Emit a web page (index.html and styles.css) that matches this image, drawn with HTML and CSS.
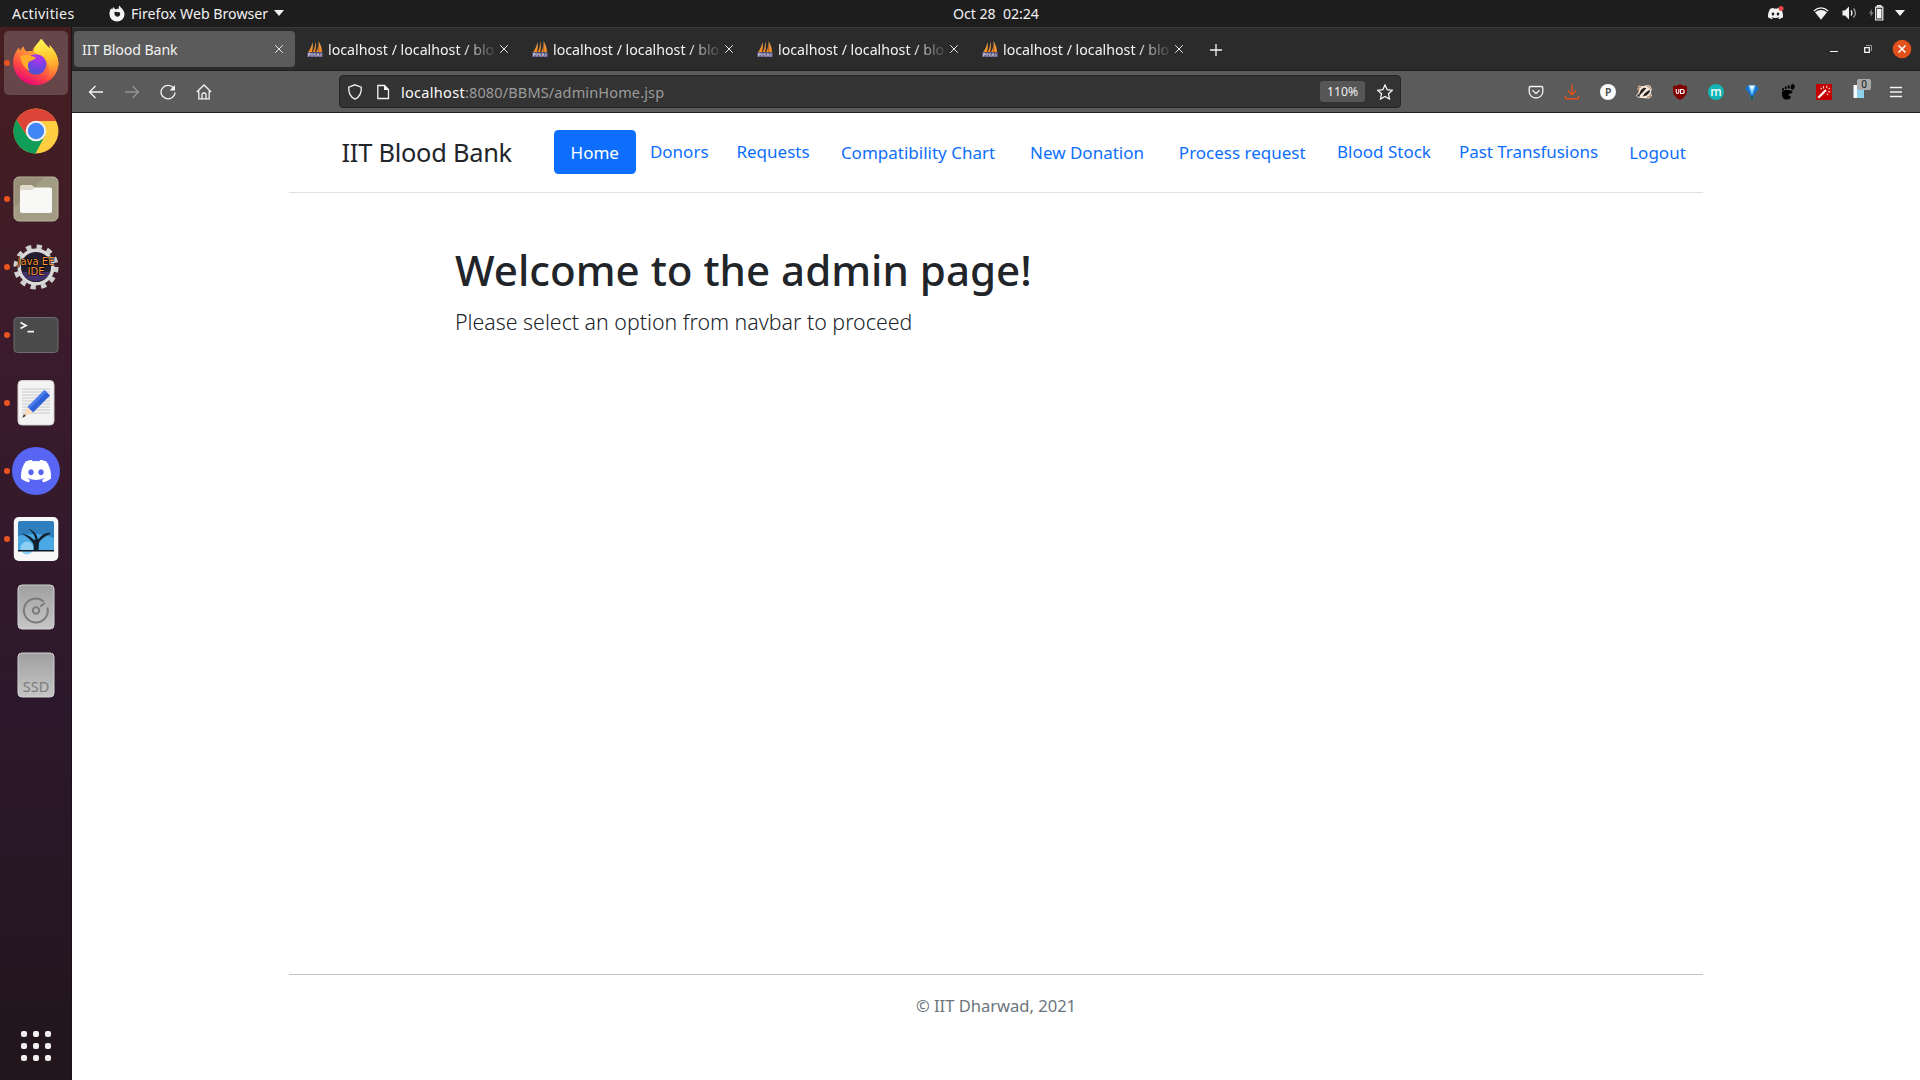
FILE: index.html
```html
<!DOCTYPE html>
<html lang="en">
<head>
<meta charset="utf-8">
<title>IIT Blood Bank</title>
<link rel="stylesheet" href="styles.css">
</head>
<body>
<svg class="defs" aria-hidden="true">
  <defs>
    <linearGradient id="sail" x1="0" y1="0" x2="0" y2="1"><stop offset="0" stop-color="#d9a36a"/><stop offset="1" stop-color="#ff8a12"/></linearGradient>
    <symbol id="pma" viewBox="0 0 16 16">
      <path d="M5.500 1C6 4 6 8 5 11L.8 11.500C3 8.500 4.700 5 5.500 1zM8.500 .3C9.200 4 9 8 8 11L5.700 11.300C7.500 8 8.200 4 8.500 .3zM11.500 0C13.500 3 15 7 15 11L9 11.200C11 8 11.700 4 11.500 0z" fill="url(#sail)"/>
      <path d="M11.700 1V11" stroke="#7a4a20" stroke-width=".7"/>
      <path d="M.3 11.200H15.700V16H.3z" fill="#5f5c86"/>
      <path d="M1.500 15.500V12.500H3.300V14H1.500M5 15.500V12.500L6.500 14L8 12.500V15.500M9.700 15.500L11 12.500L12.300 15.500M14 12.500V15.500" fill="none" stroke="#c9c7e0" stroke-width=".9"/>
    </symbol>
    <symbol id="close" viewBox="0 0 10 10"><path d="M1.200 1.200L8.800 8.800M8.800 1.200L1.200 8.800" stroke="#e8e8e8" stroke-width="1" fill="none"/></symbol>
    <symbol id="discord" viewBox="0 0 127 96"><path fill="currentColor" d="M107.700 8.070A105.150 105.150 0 0 0 81.470 0a72.060 72.060 0 0 0-3.360 6.830 97.680 97.680 0 0 0-29.110 0A72.370 72.370 0 0 0 45.640 0a105.890 105.890 0 0 0-26.250 8.090C2.790 32.650-1.710 56.600.54 80.210a105.730 105.730 0 0 0 32.170 16.150 77.700 77.700 0 0 0 6.890-11.110 68.420 68.420 0 0 1-10.850-5.180c.91-.66 1.800-1.340 2.660-2a75.570 75.570 0 0 0 64.320 0c.87.71 1.760 1.390 2.660 2a68.680 68.680 0 0 1-10.870 5.190 77 77 0 0 0 6.890 11.100 105.250 105.250 0 0 0 32.190-16.140c2.640-27.380-4.510-51.110-18.900-72.150zM42.450 65.690C36.180 65.690 31 60 31 53s5-12.740 11.430-12.740S54 46 53.890 53s-5.050 12.690-11.440 12.690zm42.240 0C78.410 65.690 73.250 60 73.250 53s5-12.740 11.440-12.740S96.230 46 96.120 53s-5.040 12.690-11.430 12.690z"/></symbol>
  </defs>
</svg>

<div class="desktop">
  <header class="topbar">
    <span class="activities">Activities</span>
    <svg class="app-mark" viewBox="0 0 16 16"><path d="M4.200 1.500L6.500 4C7.500 3 9 3 10 3.500C9.500 2.500 9.700 1 10.500 0C11 2 15.500 4 15.500 8.800A7.500 7.200 0 0 1 .5 8.800C.3 6 1.500 4.500 2 2.800L3.200 4z" fill="#f2f2f2"/><path d="M5.500 6.500C7.500 6 8 7 10 6.500C12 7.500 11.500 11 8.500 11.200C6 11.200 5 9 5.500 6.500z" fill="#1d1d1d"/></svg>
    <span class="app-name">Firefox Web Browser</span>
    <i class="caret"></i>
    <span class="clock">Oct 28&nbsp; 02:24</span>
    <div class="tray">
      <svg class="tray-discord" viewBox="0 0 16 14"><use href="#discord" y="1.500" width="15" height="12"/><circle cx="13" cy="2.500" r="2.500" fill="#f04747"/></svg>
      <svg class="tray-wifi" viewBox="0 0 16 13"><path d="M.8 4Q8-2.200 15.200 4" fill="none" stroke="#f2f2f2" stroke-width="1.200"/><path d="M2 5.300Q8 .5 14 5.300L8 12.800z" fill="#f2f2f2"/></svg>
      <svg class="tray-sound" viewBox="0 0 16 14"><path d="M.5 4.500H3L7 .5V13.500L3 9.500H.5z" fill="#f2f2f2"/><path d="M9 4.500Q11 7 9 9.500" stroke="#f2f2f2" stroke-width="1.300" fill="none"/><path d="M11.500 2.500Q15.500 7 11.500 11.500" stroke="#aaa" stroke-width="1.200" fill="none"/></svg>
      <svg class="tray-battery" viewBox="0 0 15 16"><path d="M3 4L0 8.500H2L1.500 12L4.500 7.500H2.500z" fill="#8a8a8a"/><path d="M6.700 2.200H13.800V15H6.700zM8.500 2V.7H12V2" fill="none" stroke="#f2f2f2" stroke-width="1.200"/><path d="M8 3.800H12.500V13.500H8z" fill="#f2f2f2"/></svg>
      <i class="caret"></i>
    </div>
  </header>

  <div class="workspace">
    <aside class="dock">
      <div class="tile active running">
        <svg viewBox="0 0 48 48">
          <defs>
            <linearGradient id="fx" x1=".8" y1="0" x2=".3" y2="1"><stop offset="0" stop-color="#fff44f"/><stop offset=".35" stop-color="#ffa436"/><stop offset=".7" stop-color="#ff4a42"/><stop offset="1" stop-color="#e4007c"/></linearGradient>
            <linearGradient id="fx2" x1=".4" y1="0" x2=".6" y2="1"><stop offset="0" stop-color="#fff44f"/><stop offset=".5" stop-color="#ffc52f"/><stop offset="1" stop-color="#ff7a30" stop-opacity=".2"/></linearGradient>
            <radialGradient id="fxg" cx=".6" cy=".2" r=".9"><stop offset="0" stop-color="#b833e8"/><stop offset=".5" stop-color="#7542e5"/><stop offset="1" stop-color="#3a5bc4"/></radialGradient>
          </defs>
          <path d="M30 .5C33 5 35 7 38 9.500L37.500 6C43 12 46.500 18 46.500 25A22.700 22.700 0 0 1 1.200 25C1 18 3 13 7 8.500L8 12C9 10 10 8.500 12 7.500C11.800 10 13 11.500 15 12.500C17 12 19 12 20.500 12.200C21 8 25 6 28.500 .5z" fill="url(#fx)"/>
          <path d="M30 .5C33 5 35 7 38 9.500L37.500 6C43 12 46.500 18 46.500 25C46 34 40 39 34 41C39 36 38 24 32 18C29 15 24 16 22 12.500C22 8 25 6 28.500 .5z" fill="url(#fx2)"/>
          <circle cx="24" cy="25.500" r="10.300" fill="url(#fxg)"/>
          <path d="M8 17C12 15 18 16 24 18.500C22.500 21.500 18 21.500 16.500 23.500C15.500 26 15.500 29 18 32C13 30 9 24 8 17z" fill="#ffab2e"/>
        </svg>
      </div>
      <div class="tile">
        <svg viewBox="0 0 48 48">
          <circle cx="24" cy="24" r="22.500" fill="#ffcd40"/>
          <path d="M24 24L32.700 29L23.500 46.500A22.500 22.500 0 0 1 4.500 12.750L15.300 29z" fill="#0f9d58"/>
          <path d="M4.500 12.750A22.500 22.500 0 0 1 44.200 14H24L15.300 29z" fill="#db4437"/>
          <circle cx="24" cy="24" r="10.300" fill="#f1f1f1"/><circle cx="24" cy="24" r="8.200" fill="#4285f4"/>
        </svg>
      </div>
      <div class="tile running">
        <svg viewBox="0 0 48 48"><rect x="2" y="2" width="44" height="44" rx="5" fill="#a39c84" stroke="#bdb7a1"/><path d="M2.500 32L32 2.500H7Q2.500 2.500 2.500 7z" fill="#978f77"/><path d="M8 12Q8 10 10 10H20L24 14V20H8z" fill="#dedacb"/><path d="M8 17Q8 15 10 15H20L23 12.500H38Q40 12.500 40 14.500V36Q40 38 38 38H10Q8 38 8 36z" fill="#f8f8f6"/></svg>
      </div>
      <div class="tile running">
        <svg class="ide" viewBox="0 0 48 48"><circle cx="24" cy="24" r="20.300" fill="none" stroke="#cfcfcf" stroke-width="4.500" stroke-dasharray="5.300 5.330"/><circle cx="24" cy="24" r="16.800" fill="#231f30" stroke="#d9d9d9" stroke-width="3.500"/><path d="M10 29H38Q34 38 24 38Q14 38 10 29z" fill="#43306c"/><g class="edge"><text x="24" y="21.500">Java EE</text><text x="24" y="31.500">IDE</text></g></svg>
      </div>
      <div class="tile running">
        <svg viewBox="0 0 48 48"><rect x="2" y="6.500" width="44" height="35" rx="3.500" fill="#4b4b4b" stroke="#6d6d6d"/><path d="M8.500 11.500L14 14.500L8.500 17.500M15.500 20.700H22" fill="none" stroke="#f4f4f4" stroke-width="1.800"/></svg>
      </div>
      <div class="tile running">
        <svg viewBox="0 0 48 48"><rect x="6" y="1.500" width="36" height="44.500" rx="4" fill="#f3f3f3" stroke="#d0d0d0"/><path d="M10 10H38M10 13H38M10 16H38M10 19H38M10 22H38M10 25H38M10 28H38M10 31H38M10 34H38" stroke="#c9c9c9"/><path d="M32.500 11L38 16.500L21 33.500L15.500 28z" fill="#2f62d9"/><path d="M32.500 11L34.500 13L17.500 30L15.500 28z" fill="#4b7df0"/><path d="M15.500 28L21 33.500L10.500 38.500z" fill="#f9dcc0"/><path d="M12 35L13.800 37L10.300 38.700z" fill="#333"/></svg>
      </div>
      <div class="tile running">
        <svg viewBox="0 0 48 48"><circle cx="24" cy="24" r="24" fill="#5865f2"/><use href="#discord" x="9" y="12.700" width="30" height="22.700" color="#fff"/></svg>
      </div>
      <div class="tile running">
        <svg viewBox="0 0 48 48"><rect x="1.800" y="2" width="44.500" height="44" rx="5" fill="#f7f7f7"/><path d="M6 8Q6 6 8 6H40Q42 6 42 8V36H6z" fill="#2f7fbe"/><path d="M6 21Q24 16 42 23V36H6z" fill="#4aa9e4"/><circle cx="15" cy="33" r="6.500" fill="#8ccff3"/><path d="M6 35H42V36.500H6z" fill="#0b1620"/><path d="M9 18.500Q17 19.500 21.500 24.500L23.500 25Q22.500 18 16 13.500Q24.500 16.500 26 24.500Q31 17.500 38.500 17.500L38 19Q31 21.500 27 27.500L26.500 35.500H21.800L21.500 29Q17 22 9 18.500z" fill="#11212e"/></svg>
      </div>
      <div class="tile">
        <svg viewBox="0 0 48 48"><defs><linearGradient id="disk" x1="0" y1="0" x2="0" y2="1"><stop offset="0" stop-color="#a0a0a0"/><stop offset="1" stop-color="#c6c6c6"/></linearGradient></defs><rect x="6" y="2" width="36" height="44" rx="4" fill="url(#disk)" stroke="#d2d2d2"/><path d="M31.800 18.500A12 12 0 1 0 35.500 24.500M33 20L28 23.500" fill="none" stroke="#7b7b7b" stroke-width="2"/><circle cx="24" cy="27.500" r="3.200" fill="none" stroke="#7b7b7b" stroke-width="2"/></svg>
      </div>
      <div class="tile">
        <svg class="ssd" viewBox="0 0 48 48"><rect x="6" y="2" width="36" height="44" rx="4" fill="url(#disk)" stroke="#d2d2d2"/><text x="24" y="40.500">SSD</text></svg>
      </div>
      <div class="apps"><i></i><i></i><i></i><i></i><i></i><i></i><i></i><i></i><i></i></div>
    </aside>

    <main class="browser">
      <div class="tabs">
        <div class="tab current"><span class="tab-title">IIT Blood Bank</span><svg class="x"><use href="#close"/></svg></div>
        <div class="tab"><svg class="fav"><use href="#pma"/></svg><span class="tab-title fade">localhost / localhost / blo</span><svg class="x"><use href="#close"/></svg></div>
        <div class="tab"><svg class="fav"><use href="#pma"/></svg><span class="tab-title fade">localhost / localhost / blo</span><svg class="x"><use href="#close"/></svg></div>
        <div class="tab"><svg class="fav"><use href="#pma"/></svg><span class="tab-title fade">localhost / localhost / blo</span><svg class="x"><use href="#close"/></svg></div>
        <div class="tab"><svg class="fav"><use href="#pma"/></svg><span class="tab-title fade">localhost / localhost / blo</span><svg class="x"><use href="#close"/></svg></div>
        <svg class="plus" viewBox="0 0 12 12"><path d="M6 0V12M0 6H12" stroke="#f6f6f6" stroke-width="1.300"/></svg>
        <svg class="controls" viewBox="0 0 84 20"><path d="M1 12.500H9" stroke="#f4f4f4"/><path d="M35.700 8.700H40.300V13.300H35.700z" fill="none" stroke="#f4f4f4" stroke-width="1.300"/><path d="M37 6.500H42.500V12" fill="none" stroke="#999"/><circle cx="73" cy="10" r="9.300" fill="#e2501c"/><path d="M69.500 6.500L76.500 13.500M76.500 6.500L69.500 13.500" stroke="#fff" stroke-width="1.500"/></svg>
      </div>

      <div class="toolbar">
        <div class="nav-buttons">
          <svg viewBox="0 0 16 16"><path d="M15 8H1.500M7.500 2L1.500 8L7.500 14" /></svg>
          <svg class="dim" viewBox="0 0 16 16"><path d="M1 8H14.500M8.500 2L14.500 8L8.500 14"/></svg>
          <svg viewBox="0 0 16 16"><path d="M13.500 4A7 6.700 0 1 0 15 8.500"/><path class="solid" d="M15 1V6.500H9.500z"/></svg>
          <svg viewBox="0 0 16 16"><path d="M.8 8L8 1L15.200 8M2.800 7V14.800H13.200V7M6 14.500V10.500Q6 9 8 9Q10 9 10 10.500V14.500"/></svg>
        </div>
        <div class="urlbar">
          <svg viewBox="0 0 16 16"><path d="M8 .8L14.300 3.200C14.600 8.500 12.500 13 8 15.200C3.500 13 1.400 8.500 1.700 3.200z"/></svg>
          <svg viewBox="0 0 16 16"><path d="M2.800 1.500H9.500L13.500 5.500V14.500H2.800z"/><path class="solid" d="M9 1V6H14z"/></svg>
          <span class="url"><b>localhost</b>:8080/BBMS/adminHome.jsp</span>
          <span class="zoom">110%</span>
          <svg class="star" viewBox="0 0 16 16"><path d="M8 1L10.200 5.700L15.300 6.300L11.500 9.800L12.500 15L8 12.400L3.500 15L4.500 9.800L.7 6.300L5.800 5.700z"/></svg>
        </div>
        <div class="extensions">
          <svg viewBox="0 0 16 16"><path d="M2.500 2.500H13.500Q14.800 2.500 14.800 3.800V7.500A6.800 6.500 0 0 1 1.200 7.500V3.800Q1.200 2.500 2.500 2.500zM4.500 6.300L8 9.700L11.500 6.300" fill="none" stroke="#f4f4f4" stroke-width="1.300"/></svg>
          <svg viewBox="0 0 16 16"><path d="M8 .5V10.500M3.800 6.500L8 10.700L12.200 6.500M1.500 12V13.500Q1.500 14.700 2.700 14.700H13.300Q14.500 14.700 14.500 13.500V12" fill="none" stroke="#e2501c" stroke-width="1.400"/></svg>
          <svg viewBox="0 0 16 16"><circle cx="8" cy="8" r="8" fill="#fafafa"/><text class="glyph-p" x="8.300" y="12">P</text></svg>
          <svg viewBox="0 0 16 16"><path d="M0 11.500L2.500 8.500L1.500 4.500L3 1.500L6 2.300L12 1L14.500 2L15.800 5L14.800 8.500L16 12L13 14.500L6 14L2 13.500z" fill="#f6e9da"/><path d="M5 6L7.500 3.800L10.500 4L7 8L4 11L3 10zM9 9L14 5.500L13.500 8.500L10.500 11.500L6.500 12.500z" fill="#26221f"/><path d="M2.500 7.500L3 3L5 3M11 2.200L13.500 3L14.500 5M13.800 10L14.500 12.500L11 13.300" stroke="#8a5c3c" stroke-width=".9" fill="none"/><circle cx="2.600" cy="11.500" r="1.200" fill="#1b1b1b"/></svg>
          <svg viewBox="0 0 16 16"><path d="M8 .2Q10.500 2 15 2V7Q14.500 13 8 15.800Q1.500 13 1 7V2Q5.500 2 8 .2z" fill="#800000"/><path d="M4.200 5V8Q4.200 9.500 5.500 9.500Q6.800 9.500 6.800 8V5M8.500 9.500V5.500H10Q12.200 5.500 12.200 7.500Q12.200 9.500 10 9.500z" fill="none" stroke="#fff" stroke-width="1.100"/></svg>
          <svg viewBox="0 0 16 16"><circle cx="8" cy="8" r="8" fill="#12b5b5"/><text class="glyph-m" x="8" y="12">m</text></svg>
          <svg viewBox="0 0 16 16"><path d="M1.300 4.500L4.500 1.200H11.500L14.700 4.500L9.500 11.500V15.500H6.500V11.500z" fill="#1576d0"/><path d="M4.500 1.200H11.500L10.500 5L8 11L5.500 5z" fill="#7cc7ff"/><path d="M6 1.700H10L8 6.500z" fill="#fff"/><path d="M7 12.500H9V15.500H7z" fill="#1b5a2e"/></svg>
          <svg viewBox="0 0 16 16"><path d="M2 10.500C1.500 6.500 4 5.800 7 6C10 6.300 12.500 6.300 12.500 8C12.300 10 9 9.200 8.500 10.700C8.200 12 10.500 11.300 10.800 13C10.500 15 8 15.700 6 15.500C3 15.200 2.300 13 2 10.500z"/><ellipse cx="12.700" cy="2.900" rx="2" ry="2.800" transform="rotate(12 12.700 2.900)"/><ellipse cx="8.700" cy="3" rx="1.200" ry="1.700"/><ellipse cx="5.700" cy="3.700" rx="1" ry="1.500"/><ellipse cx="3" cy="5.200" rx="1" ry="1.300"/></svg>
          <svg viewBox="0 0 16 16"><path d="M0 0H16V16H0z" fill="#c40000"/><path d="M2.300 13.700L10 6" stroke="#fff" stroke-width="2.200"/><path d="M7.500 2V4.500M11 1.500L10.500 4M14 4L12.500 5M14.300 8L12 7.500M4.500 4L6 5M12 11L11 9.500" stroke="#ffd0d0" stroke-width="1.100"/></svg>
          <div class="reader"><svg viewBox="0 0 16 16"><path d="M1.500 1H6V14H1.500z" fill="#f4fbff"/><path d="M5 3H12V14H5z" fill="#8ed3ee"/></svg><span class="badge">0</span></div>
          <svg viewBox="0 0 16 16"><path d="M2 3.500H14M2 8H14M2 12.500H14" stroke="#f4f4f4" stroke-width="1.300"/></svg>
        </div>
      </div>

      <section class="page">
        <nav class="site-nav">
          <span class="brand">IIT Blood Bank</span>
          <a class="home">Home</a>
          <a class="donors raised">Donors</a>
          <a class="requests raised">Requests</a>
          <a class="chart">Compatibility Chart</a>
          <a class="donation">New Donation</a>
          <a class="process">Process request</a>
          <a class="stock raised">Blood Stock</a>
          <a class="past raised">Past Transfusions</a>
          <a class="logout">Logout</a>
        </nav>
        <div class="intro">
          <h1>Welcome to the admin page!</h1>
          <p>Please select an option from navbar to proceed</p>
        </div>
        <footer class="site-footer">© IIT Dharwad, 2021</footer>
      </section>
    </main>
  </div>
</div>
</body>
</html>
```
FILE: styles.css
```css
* { box-sizing: border-box; }
body {
  margin: 0;
  font-family: "Noto Sans", "Open Sans", sans-serif;
  font-size: 14.2px;
  color: #f2f2f2;
  overflow: hidden;
}
svg { display: block; flex: none; }
.defs { width: 0; height: 0; position: absolute; }
.desktop { width: 1920px; height: 1080px; display: flex; flex-direction: column; }

/* System bar */
.topbar {
  height: 27px;
  background: #1d1d1d;
  display: flex;
  align-items: center;
  padding: 0 15px 1px 12px;
  white-space: pre;
}
.activities { width: 97px; letter-spacing: .35px; }
.app-mark { width: 16px; height: 19px; margin-right: 6px; }
.app-name { width: 143px; }
.caret { border: 5px solid transparent; border-top: 6px solid #f2f2f2; border-bottom: 0; }
.clock { margin-left: 669px; letter-spacing: -.05px; }
.tray { margin-left: auto; display: flex; align-items: center; }
.tray-discord { width: 16px; height: 14px; margin-right: 29px; }
.tray-wifi { width: 16px; height: 13px; margin-right: 13px; }
.tray-sound { width: 16px; height: 14px; margin-right: 11px; }
.tray-battery { width: 15px; height: 16px; margin-right: 11px; }

.workspace { flex: 1; display: flex; min-height: 0; }

/* Dock */
.dock {
  width: 72px;
  padding: 4px 4px 19px;
  display: flex;
  flex-direction: column;
  gap: 4px;
  background: linear-gradient(#471e20 0, #3b1b2b 30%, #2c182c 64%, #22151c 98%);
  border-right: 1px solid #1c1118;
}
.tile {
  height: 64px;
  border-radius: 5px;
  display: flex;
  align-items: center;
  justify-content: center;
  position: relative;
  width: 64px;
}
.tile svg { width: 48px; height: 48px; }
.tile.active { background: #664648; }
.tile.running::before {
  content: "";
  position: absolute;
  left: 0;
  top: 29px;
  width: 6px;
  height: 6px;
  border-radius: 50%;
  background: #e95420;
}
.ide { overflow: visible; }
.ide text {
  font: 10px "DejaVu Sans", sans-serif;
  text-anchor: middle;
  fill: #ff943a;
  stroke: #000;
  stroke-width: 1.2px;
  paint-order: stroke fill;
}
.ssd text { font: 14.5px "Noto Sans", sans-serif; text-anchor: middle; fill: #7b7b7b; }
.apps { margin: auto 0 0 17px; display: grid; grid-template-columns: repeat(3, 6px); gap: 6px; }
.apps i { height: 6px; border-radius: 2px; background: #f2f0ef; }

/* Browser chrome */
.browser { flex: 1; display: flex; flex-direction: column; min-width: 0; }
.tabs {
  height: 44px;
  background: #2b2b2b;
  border-top: 1px solid #3b3b3b;
  border-bottom: 1px solid #1e1e1e;
  display: flex;
  align-items: center;
  padding: 1px 7px 0 2px;
}
.tab {
  width: 221px;
  height: 36px;
  margin-right: 4px;
  margin-bottom: 1px;
  padding: 0 11px 0 8px;
  border-radius: 4px;
  display: flex;
  align-items: center;
}
.tab.current { background: #5b5b5b; }
.tab.current .tab-title { letter-spacing: -.12px; }
.fav { width: 16px; height: 16px; margin-right: 5px; }
.tab-title { flex: 1; white-space: nowrap; }
.fade { mask-image: linear-gradient(90deg, #000 calc(100% - 34px), transparent calc(100% + 2px)); }
.x { width: 10px; height: 10px; }
.fade + .x { margin-left: 3px; }
.plus { width: 12px; height: 12px; margin-left: 11px; }
.controls { width: 84px; height: 20px; margin-left: auto; margin-bottom: 1px; }

.toolbar {
  height: 42px;
  background: #5b5b5b;
  border-bottom: 1px solid #232323;
  display: flex;
  align-items: center;
  padding: 0 16px;
}
.nav-buttons { display: flex; gap: 20px; width: 251px; }
.nav-buttons svg, .extensions svg { width: 16px; height: 16px; }
.nav-buttons path, .urlbar path { stroke: #f4f4f4; stroke-width: 1.3; fill: none; }
.nav-buttons .dim path { stroke: #949494; }
.toolbar .solid { fill: #f4f4f4; stroke: none; }
.urlbar {
  width: 1062px;
  height: 33px;
  background: #333;
  border: 1px solid #252525;
  border-radius: 4px;
  display: flex;
  align-items: center;
  padding: 0 7px;
}
.urlbar svg { width: 16px; height: 16px; margin-right: 12px; }
.urlbar svg:nth-child(2) { margin-right: 10px; }
.urlbar .star { margin: 0 0 0 12px; }
.url { flex: 1; font-size: 14.5px; letter-spacing: .14px; color: #9c9c9c; }
.url b { font-weight: 400; color: #fbfbfb; letter-spacing: .3px; }
.zoom {
  width: 45px;
  height: 21px;
  line-height: 21px;
  border-radius: 3px;
  background: #565656;
  text-align: center;
  font-size: 12.2px;
}
.extensions { margin-left: auto; display: flex; gap: 20px; }
.glyph-p { font: 600 10.5px "Noto Sans", sans-serif; text-anchor: middle; fill: #4a4a4a; }
.glyph-m { font: 500 12px "Noto Sans", sans-serif; text-anchor: middle; fill: #fff; }
.reader { position: relative; }
.badge {
  position: absolute;
  left: 5px;
  top: -5px;
  width: 14px;
  height: 11px;
  line-height: 11px;
  font-size: 10px;
  text-align: center;
  color: #111;
  background: #aaa;
  border-radius: 2px;
}

/* Web page */
.page {
  flex: 1;
  background: #fff;
  color: #212529;
  padding: 0 217px;
  display: flex;
  flex-direction: column;
}
.site-nav {
  height: 80px;
  border-bottom: 1px solid #dee2e6;
  display: flex;
  align-items: center;
  padding-bottom: 2px;
}
.brand { width: 264.5px; padding-left: 52.5px; font-size: 25.4px; letter-spacing: -.25px; white-space: nowrap; }
.site-nav a {
  height: 44px;
  line-height: 46px;
  font-size: 17px;
  color: #0d6efd;
  text-align: center;
  white-space: nowrap;
}
.site-nav .raised { line-height: 44px; }
.site-nav .home { width: 82.5px; background: #0d6efd; color: #fff; border-radius: 4.4px; }
.donors { width: 86.5px; }
.requests { width: 101px; }
.chart { width: 189px; }
.donation { width: 149px; }
.process { width: 161.5px; }
.stock { width: 122px; }
.site-nav .past { width: 167px; letter-spacing: -.05px; }
.logout { width: 91px; }
.intro { padding: 50px 165px 0 166px; }
h1 { margin: 0 0 9px; font-size: 42.1px; font-weight: 500; line-height: 53px; }
.intro p { margin: 0; font-size: 21.35px; font-weight: 300; line-height: 33px; }
.site-footer {
  margin-top: auto;
  height: 106px;
  border-top: 1px solid #c4c4c4;
  padding-top: 18px;
  line-height: 26px;
  font-size: 16.6px;
  letter-spacing: -.03px;
  text-align: center;
  color: #6c757d;
}
```
